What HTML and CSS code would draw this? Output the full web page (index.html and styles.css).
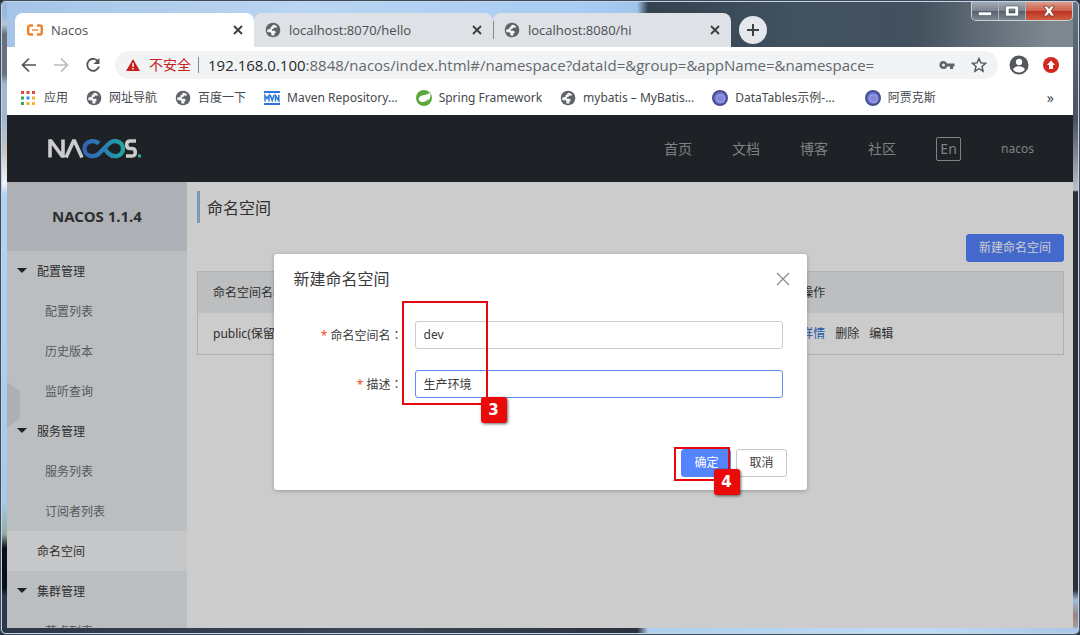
FILE: index.html
```html
<!DOCTYPE html>
<html lang="zh-CN">
<head>
<meta charset="utf-8">
<title>Nacos</title>
<link rel="stylesheet" href="styles.css">
</head>
<body class="desktop">
<svg class="defs" aria-hidden="true">
  <symbol id="globe" viewBox="0 0 24 24">
    <circle cx="12" cy="12" r="11" fill="#5f6368"/>
    <path d="M13.500 4c-2 0-3 1-2.600 2.400l-2.700 1.300.4 2.200-5.300 1.600c-.2 1.300 0 2.600.4 3.800l4.700.1 1.300 1.900-.4 2.700c1.600.6 3.200.7 4.700.3l.1-2.700 2.300-2.400-1.800-2-3.900-.1-.5-2.400 2.600-.4 1.200-2 3 .2 1.300-1.300A9 9 0 0 0 13.500 4z" fill="#f1f3f4"/>
  </symbol>
  <symbol id="cross" viewBox="0 0 12 12">
    <path d="M2 2l8 8M10 2l-8 8" stroke="#3c4043" stroke-width="1.900" fill="none"/>
  </symbol>
  <symbol id="orb" viewBox="0 0 16 16">
    <circle cx="8" cy="8" r="8" fill="#47508f"/>
    <circle cx="8" cy="8" r="6" fill="#6d74cf"/>
    <circle cx="8.500" cy="8.500" r="4" fill="#8287dc" stroke="#a4a9ea"/>
  </symbol>
</svg>
<div class="window">
  <div class="titlebar">
    <div class="tabs">
      <div class="tab tab-active">
        <svg class="icon16" viewBox="0 0 16 16"><path d="M6 3.500H3.200Q1.200 3.500 1.200 5.500v5q0 2 2 2H6M10 3.500h2.800q2 0 2 2v5q0 2-2 2H10" fill="none" stroke="#f0802a" stroke-width="2.400"/><path d="M5 8h6" stroke="#f0802a" stroke-width="1.400"/></svg>
        <span class="tab-name">Nacos</span>
        <button class="bare" aria-label="关闭"><svg class="icon12"><use href="#cross"/></svg></button>
      </div>
      <div class="tab">
        <svg class="icon16"><use href="#globe"/></svg>
        <span class="tab-name">localhost:8070/hello</span>
        <button class="bare" aria-label="关闭"><svg class="icon12"><use href="#cross"/></svg></button>
      </div>
      <div class="tab tab-last">
        <svg class="icon16"><use href="#globe"/></svg>
        <span class="tab-name">localhost:8080/hi</span>
        <button class="bare" aria-label="关闭"><svg class="icon12"><use href="#cross"/></svg></button>
      </div>
      <button class="newtab" aria-label="新标签页"><svg class="icon12" viewBox="0 0 12 12"><path d="M6 0v12M0 6h12" stroke="#3c4043" stroke-width="2"/></svg></button>
    </div>
    <div class="controls">
      <button class="ctl" aria-label="最小化"><svg width="14" height="12" viewBox="0 0 14 12"><path d="M.5 7h13v3.500H.5z" fill="#fff" stroke="#46505e" stroke-width=".6"/></svg></button>
      <button class="ctl" aria-label="最大化"><svg width="14" height="12" viewBox="0 0 14 12"><path d="M.5 1h13v10H.5zM4 4v4h6V4z" fill="#fff" fill-rule="evenodd" stroke="#46505e" stroke-width=".6"/></svg></button>
      <button class="ctl ctl-close" aria-label="关闭窗口"><svg width="14" height="12" viewBox="0 0 14 12"><path d="M1.500 1h3.500l2 2.500L9 1h3.500L9.200 5.800 12.500 11H9L7 8.200 5 11H1.500l3.300-5.200z" fill="#fff" stroke="#6e3434" stroke-width=".8"/></svg></button>
    </div>
  </div>

  <div class="toolbar">
    <button class="bare nav" aria-label="后退"><svg class="icon16" viewBox="0 0 16 16"><path d="M15 8H2M8 1.500L1.500 8 8 14.500" fill="none" stroke="#50545a" stroke-width="1.700"/></svg></button>
    <button class="bare nav" aria-label="前进"><svg class="icon16" viewBox="0 0 16 16"><path d="M1 8h13M8 1.500L14.500 8 8 14.500" fill="none" stroke="#b8bbbf" stroke-width="1.700"/></svg></button>
    <button class="bare nav" aria-label="刷新"><svg class="icon16" viewBox="0 0 16 16"><path d="M13.300 4.500A6 6 0 1 0 14 9.500" fill="none" stroke="#50545a" stroke-width="1.800"/><path d="M14.500 1v6h-6z" fill="#50545a"/></svg></button>
    <div class="omnibox">
      <svg class="warn" viewBox="0 0 14 14"><path d="M7 1l7 12H0z" fill="#c5221f"/><path d="M6.300 5h1.400v4H6.300zM6.300 10h1.400v1.400H6.300z" fill="#fff"/></svg>
      <span class="unsafe">不安全</span>
      <span class="rule"></span>
      <span class="url"><b>192.168.0.100</b>:8848/nacos/index.html#/namespace?dataId=&amp;group=&amp;appName=&amp;namespace=</span>
      <svg class="icon16" viewBox="0 0 16 16"><path d="M4.500 4a4 4 0 1 0 3.700 5.500H11V12h3V9.500h1.500v-3H8.200A4 4 0 0 0 4.500 4zm0 2.500a1.500 1.500 0 1 1 0 3 1.500 1.500 0 0 1 0-3z" fill="#5f6368" fill-rule="evenodd"/></svg>
      <svg class="icon16" viewBox="0 0 16 16"><path d="M8 1.500l1.900 4.400 4.800.4L11 9.500l1.100 4.700L8 11.700l-4.100 2.500L5 9.500 1.300 6.300l4.800-.4z" fill="none" stroke="#50545a" stroke-width="1.400"/></svg>
    </div>
    <svg class="avatar" viewBox="0 0 20 20"><circle cx="10" cy="10" r="9.500" fill="#54585d"/><circle cx="10" cy="7" r="3.200" fill="#fff"/><path d="M4 14.500c1-2.600 4-3.300 6-3.300s5 .7 6 3.300a7.500 7.500 0 0 1-12 0z" fill="#fff"/></svg>
    <svg class="icon16" viewBox="0 0 16 16"><circle cx="8" cy="8" r="8" fill="#d3281f"/><path d="M8 3.500l4 4.500h-2v4H6V8H4z" fill="#fff"/></svg>
  </div>

  <div class="bookmarks">
    <a class="mark" href="#"><svg class="icon16" viewBox="0 0 16 16"><path d="M0 1h3v3H0zM5.500 1h3v3h-3zM11 1h3v3h-3z" fill="#dd4b3e"/><path d="M0 6.500h3v3H0zM0 12h3v3H0z" fill="#35a853"/><path d="M5.500 6.500h3v3h-3z" fill="#4285f4"/><path d="M11 6.500h3v3h-3zM5.500 12h3v3h-3zM11 12h3v3h-3z" fill="#f2b32b"/></svg>应用</a>
    <a class="mark" href="#"><svg class="icon16"><use href="#globe"/></svg>网址导航</a>
    <a class="mark" href="#"><svg class="icon16"><use href="#globe"/></svg>百度一下</a>
    <a class="mark" href="#"><svg class="icon16" viewBox="0 0 16 16"><path d="M0 1h16v2H0zM0 13h16v2H0z" fill="#2d77dc"/><path d="M1 11.500V5.500l2 3 2-3v6M6.300 5l1.900 5.500L10.100 5M11.500 11.500V5.500l3.300 5.200V5" fill="none" stroke="#2d77dc" stroke-width="1.500"/></svg>Maven Repository...</a>
    <a class="mark" href="#"><svg class="icon16" viewBox="0 0 16 16"><circle cx="8" cy="8" r="8" fill="#5da83b"/><path d="M14 2.500C12 5 8 4.500 5 6c-2.500 1.200-3 4-1 5.300 3 2.200 8.500.8 10-3.300.7-2 .5-4 0-5.500z" fill="#fff"/><path d="M3 13c4-.3 7.500-1.500 9.500-4.500-.5 4-4 5.800-9.500 4.500z" fill="#5da83b"/></svg>Spring Framework</a>
    <a class="mark" href="#"><svg class="icon16"><use href="#globe"/></svg>mybatis – MyBatis...</a>
    <a class="mark" href="#"><svg class="icon16"><use href="#orb"/></svg>DataTables示例-...</a>
    <a class="mark mark-last" href="#"><svg class="icon16"><use href="#orb"/></svg>阿贾克斯</a>
    <button class="bare more">»</button>
  </div>

  <div class="page">
    <header class="header">
      <svg class="logo" viewBox="0 0 93 20" role="img" aria-label="NACOS">
        <defs><linearGradient id="loop"><stop offset="0" stop-color="#3d7fe0"/><stop offset=".5" stop-color="#349fe0"/><stop offset="1" stop-color="#27d0c8"/></linearGradient></defs>
        <g fill="none" stroke-width="3.600">
          <path d="M2 18.500V2h1L14 17h1V.5M18 18.500L25.500 2h1L34 18.500" stroke="#fff"/>
          <path d="M51 4.500C48 1.800 44.500 2 42.500 2.300a7.500 7.500 0 0 0 0 14.700c3.500.5 6.500-.5 8.500-2.500l9.500-9.500c2-2 5-3.300 8.500-2.700a7.500 7.500 0 0 1 0 14.700c-3.500.6-6.500-.7-8.500-2.500L56.500 10" stroke="url(#loop)" stroke-width="4.400"/>
          <path d="M88 2h-6q-3.300 0-3.300 3.700T82 9.500h2q3.300 0 3.300 3.800T84 17h-6" stroke="#fff"/>
        </g>
        <path d="M90 15.500h3v3h-3z" fill="#27e8c8"/>
      </svg>
      <nav class="topnav">
        <a href="#">首页</a><a href="#">文档</a><a href="#">博客</a><a href="#">社区</a>
        <button class="lang">En</button>
        <a class="user" href="#">nacos</a>
      </nav>
    </header>
    <div class="columns">
      <aside class="sidebar">
        <h1 class="version">NACOS 1.1.4</h1>
        <a class="item group" href="#">配置管理</a>
        <a class="item sub" href="#">配置列表</a>
        <a class="item sub" href="#">历史版本</a>
        <a class="item sub" href="#">监听查询</a>
        <a class="item group" href="#">服务管理</a>
        <a class="item sub" href="#">服务列表</a>
        <a class="item sub" href="#">订阅者列表</a>
        <a class="item current" href="#">命名空间</a>
        <a class="item group" href="#">集群管理</a>
        <a class="item sub" href="#">节点列表</a>
        <span class="handle"></span>
      </aside>
      <main class="main">
        <h2 class="title">命名空间</h2>
        <div class="actions"><button class="btn btn-primary">新建命名空间</button></div>
        <table class="table">
          <thead><tr><th class="col-name">命名空间名称</th><th>操作</th></tr></thead>
          <tbody><tr><td>public(保留空间)</td><td><div class="ops"><a class="detail" href="#">详情</a><a href="#">删除</a><a href="#">编辑</a></div></td></tr></tbody>
        </table>
      </main>
    </div>
    <div class="overlay">
      <form class="dialog" role="dialog" aria-labelledby="dlg-title">
        <div class="dialog-head">
          <h3 class="dialog-title" id="dlg-title">新建命名空间</h3>
          <button type="button" class="bare" aria-label="关闭"><svg class="dialog-x" viewBox="0 0 14 14"><path d="M1 1l12 12M13 1L1 13" stroke="#8a8d93" stroke-width="1.300"/></svg></button>
        </div>
        <div class="fields">
          <label class="label" for="ns-name">命名空间名<span class="colon" lang="zh-TW">：</span></label>
          <input class="input" id="ns-name" type="text" value="dev">
          <label class="label" for="ns-desc">描述<span class="colon" lang="zh-TW">：</span></label>
          <input class="input input-focus" id="ns-desc" type="text" value="生产环境">
        </div>
        <div class="dialog-foot">
          <button type="button" class="btn btn-primary">确定</button>
          <button type="button" class="btn">取消</button>
        </div>
        <span class="frame frame-fields"></span><span class="step step-fields">3</span>
        <span class="frame frame-ok"></span><span class="step step-ok">4</span>
      </form>
    </div>
  </div>
</div>
</body>
</html>
```
FILE: styles.css
```css
* { box-sizing: border-box; }

html { height: 100%; }

.desktop {
  height: 100%;
  margin: 0;
  background: #26303c;
  font: 12px/20px "Noto Sans", "Noto Sans CJK SC", sans-serif;
  color: #3a3a3a;
  overflow: hidden;
}

a { color: inherit; text-decoration: none; }
button, input { font: inherit; color: inherit; }
svg { flex: none; display: block; }

.defs { position: absolute; width: 0; height: 0; }
.bare { display: block; padding: 0; border: 0; background: none; }
.icon12 { width: 12px; height: 12px; }
.icon16 { width: 16px; height: 16px; }

.window {
  display: flex;
  flex-direction: column;
  height: 100%;
  padding: 2px 7px 7px;
  border-radius: 6px;
  box-shadow: inset 0 0 0 1px #3d4b5e, inset 0 0 0 2px #c5d3e2;
  background:
    linear-gradient(90deg, #2c3846, #3a4656 36%, #2a323d 59%, #aecfee 60%, #bfdcf6 85%, #a9c6e8) bottom / 100% 7px no-repeat,
    linear-gradient(#98b9dd 0 16px, #b9c9da 24px, #69717c 34px 74px, #a1b9d0 84px 120px, #c9c3c2 150px, #f1f5f9 184px, #b4d3f2 194px, #a9c9ea 500px, #90b0a4 534px, #0c1016 548px 588px, #2d3948 596px) left / 7px 100% no-repeat,
    linear-gradient(#66717d, #48535f 120px, #b9c0c7 190px, #273138 192px 590px, #9fbbd8 600px, #9a8180 616px, #aab4bf) right / 7px 100% no-repeat,
    linear-gradient(90deg, #a5c4e6, #b9d5f3 28%, #a7cbf3 55%, #a0c4ea 59%, #35424f 60%, #415261 74%, #44515e 85%, #7d8790 97%) top / 100% 48px no-repeat,
    #2b3542;
}

.titlebar { display: flex; justify-content: space-between; align-items: flex-start; flex: none; height: 45px; }
.tabs { display: flex; align-items: center; padding: 11px 0 0 8px; }
.tab {
  display: flex;
  align-items: center;
  gap: 8px;
  width: 239px;
  height: 34px;
  padding: 0 10px 0 11px;
  background: #dee1e6;
  font-family: "Open Sans", sans-serif;
  font-size: 13px;
  color: #4a4e52;
  border-radius: 8px 8px 0 0;
}
.tab-active { background: #fff; padding-left: 12px; }
.tab-last { position: relative; width: 238px; }
.tab-last::before { content: ""; position: absolute; left: 0; top: 8px; width: 1px; height: 18px; background: #84888d; }
.tab-name { flex: 1; }
.newtab { display: grid; place-items: center; width: 28px; height: 28px; margin-left: 8px; padding: 0; border: 0; border-radius: 50%; background: #e4e7eb; }

.controls { display: flex; border: 1px solid #c9d0d8; border-top: 0; border-radius: 0 0 5px 5px; overflow: hidden; }
.ctl { display: grid; place-items: center; width: 27px; height: 18px; padding: 0; border: 0; border-right: 1px solid #a9b2bc; background: linear-gradient(#a3abb4, #7c858f 48%, #56606b 50%, #7c8690); }
.ctl-close { width: 46px; border: 0; background: linear-gradient(#dd9c8c, #cc5f49 48%, #b93220 50%, #d25d40); }

.toolbar { display: flex; align-items: center; flex: none; height: 36px; padding: 0 14px; background: #fff; }
.nav { margin-right: 16px; }
.omnibox {
  display: flex;
  align-items: center;
  flex: 1;
  height: 28px;
  margin: 0 11px 0 -2px;
  padding: 0 11px;
  border-radius: 14px;
  background: #f1f3f4;
}
.warn { width: 14px; height: 14px; margin-right: 9px; }
.unsafe { font-size: 14px; color: #c5221f; }
.rule { width: 1px; height: 16px; margin: 0 9px 0 7px; background: #85898d; }
.url { flex: 1; font-family: "Open Sans", sans-serif; font-size: 15px; color: #64686d; white-space: nowrap; }
.url b { font-weight: 400; color: #26292d; }
.omnibox .icon16 + .icon16 { margin-left: 16px; }
.avatar { width: 20px; height: 20px; margin-right: 14px; }

.bookmarks { display: flex; align-items: center; flex: none; gap: 18px; height: 32px; padding: 0 19px 2px 14px; background: #fff; color: #45494d; }
.mark { display: flex; align-items: center; gap: 7px; white-space: nowrap; }
.mark-last { margin-left: 12px; }
.more { margin-left: auto; font-size: 14px; }

.page { position: relative; display: flex; flex-direction: column; flex: 1; min-height: 0; overflow: hidden; background: #fff; }

.header { display: flex; align-items: center; justify-content: space-between; flex: none; height: 67px; padding: 0 39px 0 41px; background: #262a2f; color: #a0a2a5; }
.logo { width: 93px; height: 20px; }
.topnav { display: flex; align-items: center; gap: 40px; font-size: 14px; }
.lang { width: 25px; height: 24px; padding: 0; border: 1px solid #a0a2a5; border-radius: 2px; background: none; line-height: 20px; }
.user { font-size: 12px; }

.columns { display: flex; flex: 1; min-height: 0; }
.sidebar { position: relative; flex: none; width: 180px; overflow: hidden; background: #eaeef1; }
.version { margin: 0; background: #d9dee4; font-size: 15px; line-height: 69px; text-align: center; }
.item { position: relative; display: block; height: 40px; padding-left: 30px; line-height: 42px; }
.sub { padding-left: 38px; color: #6c6f73; }
.current { background: #f7f9fb; }
.group::before { content: ""; position: absolute; left: 10px; top: 17px; border: 5px solid transparent; border-top-color: #26292d; border-bottom: 0; }
.handle { position: absolute; left: 0; top: 200px; width: 13px; height: 46px; background: #d8dce0; clip-path: polygon(0 0, 100% 20%, 100% 80%, 0 100%); }

.main { flex: 1; padding: 9px 9px 9px 10px; }
.title { height: 32px; margin: 0; padding-left: 7px; border-left: 3px solid #9ac2e2; font-size: 16px; font-weight: 400; line-height: 34px; }
.actions { display: flex; justify-content: flex-end; padding: 11px 0 9px; }

.btn { height: 28px; padding: 0 12px; border: 1px solid #c4c6cf; border-radius: 3px; background: #fff; line-height: 26px; white-space: nowrap; }
.btn-primary { border-color: #5584ff; background: #5584ff; color: #fff; }

.table { width: 100%; border-spacing: 0; border: 1px solid #dcdee3; table-layout: fixed; }
.table th, .table td { height: 41px; padding: 0 15px; font-weight: 400; text-align: left; }
.table th { background: #ebeef1; }
.col-name { width: 68%; }
.ops { display: flex; gap: 10px; }
.detail { color: #2a73d2; }

.overlay { position: absolute; inset: 0; display: grid; place-items: center; background: rgba(0, 0, 0, .2); }
.dialog { position: relative; width: 50%; min-width: 420px; padding: 14px 17px 13px 20px; border-radius: 3px; background: #fff; box-shadow: 0 1px 4px rgba(0, 0, 0, .25); }
.dialog-head { display: flex; align-items: center; justify-content: space-between; }
.dialog-title { margin: 0; font-size: 16px; font-weight: 400; line-height: 22px; }
.dialog-x { width: 14px; height: 14px; }
.fields { display: grid; grid-template-columns: 109px 1fr; gap: 21px 12px; padding: 31px 7px 51px 0; }
.label { height: 28px; text-align: right; line-height: 28px; }
.label::before { content: "* "; color: #f04a1e; }
.colon { font-family: "Noto Sans CJK TC", sans-serif; }
.input { width: 100%; height: 28px; padding: 0 8px; border: 1px solid #c9ccd3; border-radius: 3px; outline: 0; background: #fff; }
.input-focus { border-color: #5f8bf0; }
.dialog-foot { display: flex; justify-content: flex-end; gap: 5px; padding-right: 3px; }

/* Tutorial callouts lying over the dialog */
.frame { position: absolute; border: 2px solid #e8060e; pointer-events: none; }
.frame-fields { left: 128px; top: 47px; width: 86px; height: 104px; }
.frame-ok { right: 77px; bottom: 9px; width: 56px; height: 34px; }
.step { position: absolute; width: 26px; height: 26px; border-radius: 3px; background: #ea0a0a; color: #fff; font: bold 15px/26px "DejaVu Sans", sans-serif; text-align: center; box-shadow: 1px 1px 3px rgba(0, 0, 0, .6); }
.step-fields { left: 207px; top: 143px; }
.step-ok { right: 67px; bottom: -5px; }
```
